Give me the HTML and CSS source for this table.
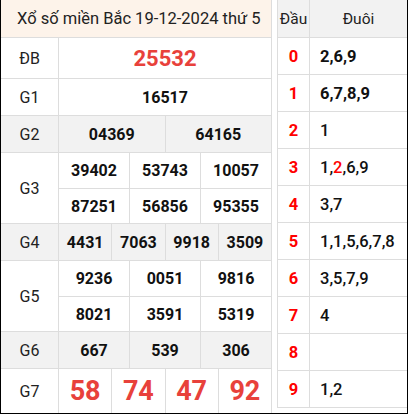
FILE: index.html
```html
<!DOCTYPE html>
<html lang="vi">
<head>
<meta charset="utf-8">
<link rel="stylesheet" href="styles.css">
</head>
<body>
<div class="page">
  <div class="kq">
    <div class="title">Xổ số miền Bắc 19-12-2024 thứ 5</div>
    <div class="prize h41">
      <div class="lbl">ĐB</div>
      <div class="nums"><div class="line"><div class="n db">25532</div></div></div>
    </div>
    <div class="prize">
      <div class="lbl">G1</div>
      <div class="nums"><div class="line"><div class="n">16517</div></div></div>
    </div>
    <div class="prize alt">
      <div class="lbl">G2</div>
      <div class="nums"><div class="line"><div class="n">04369</div><div class="n">64165</div></div></div>
    </div>
    <div class="prize">
      <div class="lbl">G3</div>
      <div class="nums">
        <div class="line s35"><div class="n">39402</div><div class="n">53743</div><div class="n">10057</div></div>
        <div class="line s35"><div class="n">87251</div><div class="n">56856</div><div class="n">95355</div></div>
      </div>
    </div>
    <div class="prize alt">
      <div class="lbl">G4</div>
      <div class="nums"><div class="line"><div class="n">4431</div><div class="n">7063</div><div class="n">9918</div><div class="n">3509</div></div></div>
    </div>
    <div class="prize">
      <div class="lbl">G5</div>
      <div class="nums">
        <div class="line s35"><div class="n">9236</div><div class="n">0051</div><div class="n">9816</div></div>
        <div class="line s35"><div class="n">8021</div><div class="n">3591</div><div class="n">5319</div></div>
      </div>
    </div>
    <div class="prize alt">
      <div class="lbl">G6</div>
      <div class="nums"><div class="line"><div class="n">667</div><div class="n">539</div><div class="n">306</div></div></div>
    </div>
    <div class="prize last">
      <div class="lbl">G7</div>
      <div class="nums"><div class="line"><div class="n big">58</div><div class="n big">74</div><div class="n big">47</div><div class="n big">92</div></div></div>
    </div>
  </div>
  <div class="lt">
    <div class="row head"><div class="d">Đầu</div><div class="t">Đuôi</div></div>
    <div class="row"><div class="d">0</div><div class="t b">2,6,9</div></div>
    <div class="row"><div class="d">1</div><div class="t b">6,7,8,9</div></div>
    <div class="row"><div class="d">2</div><div class="t">1</div></div>
    <div class="row"><div class="d">3</div><div class="t">1,<span class="red">2</span>,6,9</div></div>
    <div class="row"><div class="d">4</div><div class="t">3,7</div></div>
    <div class="row"><div class="d">5</div><div class="t">1,1,5,6,7,8</div></div>
    <div class="row"><div class="d">6</div><div class="t">3,5,7,9</div></div>
    <div class="row"><div class="d">7</div><div class="t">4</div></div>
    <div class="row"><div class="d">8</div><div class="t"></div></div>
    <div class="row"><div class="d">9</div><div class="t">1,2</div></div>
  </div>
</div>
</body>
</html>
```

FILE: styles.css
```css
* { box-sizing: border-box; }
html, body { margin: 0; padding: 0; background: #fff; }
body { font-family: Roboto, "Liberation Sans", sans-serif; color: #111; }

.page {
  width: 408px;
  height: 414px;
  display: flex;
  gap: 5px;
  border: 1px solid #000;
  border-top: none;
  overflow: hidden;
}

.kq {
  width: 271px;
  display: flex;
  flex-direction: column;
  border-right: 1px solid #ddd;
}

.title {
  height: 38px;
  background: #fdf3ea;
  border-bottom: 1px solid #ddd;
  padding-left: 16px;
  display: flex;
  align-items: center;
  font-size: 16.5px;
  color: #222;
}

.prize {
  display: flex;
  min-height: 37px;
  border-bottom: 1px solid #ddd;
}
.prize.h41 { height: 41px; }
.prize.alt { background: #f2f2f2; }
.prize.last { flex: 1; border-bottom: none; }

.lbl {
  width: 58px;
  flex: none;
  border-right: 1px solid #ddd;
  display: flex;
  align-items: center;
  justify-content: center;
  font-size: 16px;
  color: #222;
}

.nums {
  flex: 1;
  display: flex;
  flex-direction: column;
}
.line {
  flex: 1;
  display: flex;
}
.line.s35 { height: 35px; flex: none; }
.line.s35 + .line.s35 { border-top: 1px solid #ddd; height: 35px; }

.n {
  flex: 1 1 0;
  display: flex;
  align-items: center;
  justify-content: center;
  font-weight: 700;
  font-size: 16px;
  color: #111;
  border-left: 1px solid #ddd;
}
.n:first-child { border-left: none; }
.n.db { font-size: 22px; color: #e8413b; }
.n.big { font-size: 27px; color: #e8413b; }

.lt {
  width: 130px;
  height: 408px;
  border-left: 1px solid #ddd;
  display: flex;
  flex-direction: column;
}
.row {
  display: flex;
  height: 37px;
  border-bottom: 1px solid #ddd;
}
.row.head { background: #f2f2f2; height: 38px; }
.row.head .d, .row.head .t { font-weight: 400; color: #222; font-size: 15.5px; }
.row.head .t { justify-content: center; padding-left: 0; }
.d {
  width: 32px;
  flex: none;
  border-right: 1px solid #ddd;
  display: flex;
  align-items: center;
  justify-content: center;
  color: #f00;
  font-weight: 700;
  font-size: 16.5px;
}
.t {
  flex: 1;
  display: flex;
  align-items: center;
  padding-left: 10px;
  font-size: 16.5px;
  font-weight: 500;
  color: #111;
}
.t.b { font-weight: 700; }
.red { color: #f00; }
```
